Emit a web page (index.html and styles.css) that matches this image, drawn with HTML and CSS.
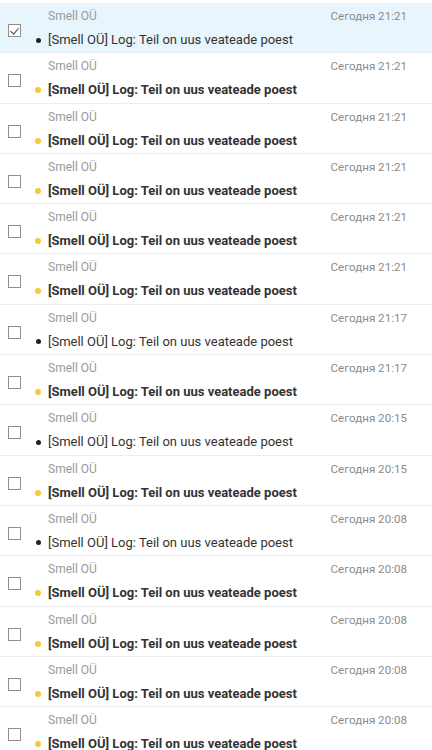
FILE: index.html
```html
<!DOCTYPE html>
<html lang="ru">
<head>
    <meta charset="UTF-8">
    <title>Inbox</title>
    <link rel="stylesheet" href="styles.css">
</head>
<body>

    <div id="mail-list">

        <div class="mail-row selected">
            <div class="mail-check"><span class="checkbox checked"></span></div>
            <div class="mail-body">
                <div class="mail-top"><span class="mail-from">Smell OÜ</span><span class="mail-date">Сегодня 21:21</span></div>
                <div class="mail-subject"><span class="dot"></span><span class="subject-text">[Smell OÜ] Log: Teil on uus veateade poest</span></div>
            </div>
        </div>

        <div class="mail-row unread">
            <div class="mail-check"><span class="checkbox"></span></div>
            <div class="mail-body">
                <div class="mail-top"><span class="mail-from">Smell OÜ</span><span class="mail-date">Сегодня 21:21</span></div>
                <div class="mail-subject"><span class="dot"></span><span class="subject-text">[Smell OÜ] Log: Teil on uus veateade poest</span></div>
            </div>
        </div>

        <div class="mail-row unread">
            <div class="mail-check"><span class="checkbox"></span></div>
            <div class="mail-body">
                <div class="mail-top"><span class="mail-from">Smell OÜ</span><span class="mail-date">Сегодня 21:21</span></div>
                <div class="mail-subject"><span class="dot"></span><span class="subject-text">[Smell OÜ] Log: Teil on uus veateade poest</span></div>
            </div>
        </div>

        <div class="mail-row unread">
            <div class="mail-check"><span class="checkbox"></span></div>
            <div class="mail-body">
                <div class="mail-top"><span class="mail-from">Smell OÜ</span><span class="mail-date">Сегодня 21:21</span></div>
                <div class="mail-subject"><span class="dot"></span><span class="subject-text">[Smell OÜ] Log: Teil on uus veateade poest</span></div>
            </div>
        </div>

        <div class="mail-row unread">
            <div class="mail-check"><span class="checkbox"></span></div>
            <div class="mail-body">
                <div class="mail-top"><span class="mail-from">Smell OÜ</span><span class="mail-date">Сегодня 21:21</span></div>
                <div class="mail-subject"><span class="dot"></span><span class="subject-text">[Smell OÜ] Log: Teil on uus veateade poest</span></div>
            </div>
        </div>

        <div class="mail-row unread">
            <div class="mail-check"><span class="checkbox"></span></div>
            <div class="mail-body">
                <div class="mail-top"><span class="mail-from">Smell OÜ</span><span class="mail-date">Сегодня 21:21</span></div>
                <div class="mail-subject"><span class="dot"></span><span class="subject-text">[Smell OÜ] Log: Teil on uus veateade poest</span></div>
            </div>
        </div>

        <div class="mail-row">
            <div class="mail-check"><span class="checkbox"></span></div>
            <div class="mail-body">
                <div class="mail-top"><span class="mail-from">Smell OÜ</span><span class="mail-date">Сегодня 21:17</span></div>
                <div class="mail-subject"><span class="dot"></span><span class="subject-text">[Smell OÜ] Log: Teil on uus veateade poest</span></div>
            </div>
        </div>

        <div class="mail-row unread">
            <div class="mail-check"><span class="checkbox"></span></div>
            <div class="mail-body">
                <div class="mail-top"><span class="mail-from">Smell OÜ</span><span class="mail-date">Сегодня 21:17</span></div>
                <div class="mail-subject"><span class="dot"></span><span class="subject-text">[Smell OÜ] Log: Teil on uus veateade poest</span></div>
            </div>
        </div>

        <div class="mail-row">
            <div class="mail-check"><span class="checkbox"></span></div>
            <div class="mail-body">
                <div class="mail-top"><span class="mail-from">Smell OÜ</span><span class="mail-date">Сегодня 20:15</span></div>
                <div class="mail-subject"><span class="dot"></span><span class="subject-text">[Smell OÜ] Log: Teil on uus veateade poest</span></div>
            </div>
        </div>

        <div class="mail-row unread">
            <div class="mail-check"><span class="checkbox"></span></div>
            <div class="mail-body">
                <div class="mail-top"><span class="mail-from">Smell OÜ</span><span class="mail-date">Сегодня 20:15</span></div>
                <div class="mail-subject"><span class="dot"></span><span class="subject-text">[Smell OÜ] Log: Teil on uus veateade poest</span></div>
            </div>
        </div>

        <div class="mail-row">
            <div class="mail-check"><span class="checkbox"></span></div>
            <div class="mail-body">
                <div class="mail-top"><span class="mail-from">Smell OÜ</span><span class="mail-date">Сегодня 20:08</span></div>
                <div class="mail-subject"><span class="dot"></span><span class="subject-text">[Smell OÜ] Log: Teil on uus veateade poest</span></div>
            </div>
        </div>

        <div class="mail-row unread">
            <div class="mail-check"><span class="checkbox"></span></div>
            <div class="mail-body">
                <div class="mail-top"><span class="mail-from">Smell OÜ</span><span class="mail-date">Сегодня 20:08</span></div>
                <div class="mail-subject"><span class="dot"></span><span class="subject-text">[Smell OÜ] Log: Teil on uus veateade poest</span></div>
            </div>
        </div>

        <div class="mail-row unread">
            <div class="mail-check"><span class="checkbox"></span></div>
            <div class="mail-body">
                <div class="mail-top"><span class="mail-from">Smell OÜ</span><span class="mail-date">Сегодня 20:08</span></div>
                <div class="mail-subject"><span class="dot"></span><span class="subject-text">[Smell OÜ] Log: Teil on uus veateade poest</span></div>
            </div>
        </div>

        <div class="mail-row unread">
            <div class="mail-check"><span class="checkbox"></span></div>
            <div class="mail-body">
                <div class="mail-top"><span class="mail-from">Smell OÜ</span><span class="mail-date">Сегодня 20:08</span></div>
                <div class="mail-subject"><span class="dot"></span><span class="subject-text">[Smell OÜ] Log: Teil on uus veateade poest</span></div>
            </div>
        </div>

        <div class="mail-row unread">
            <div class="mail-check"><span class="checkbox"></span></div>
            <div class="mail-body">
                <div class="mail-top"><span class="mail-from">Smell OÜ</span><span class="mail-date">Сегодня 20:08</span></div>
                <div class="mail-subject"><span class="dot"></span><span class="subject-text">[Smell OÜ] Log: Teil on uus veateade poest</span></div>
            </div>
        </div>

    </div>

</body>
</html>
```

FILE: styles.css
```css
body {
    margin: 0;
    background-color: #fff;
    font-family: Roboto, "Liberation Sans", Arial, sans-serif;
    overflow: hidden;
}
#mail-list {
    padding-top: 3px;
}
.mail-row {
    display: flex;
    box-sizing: border-box;
    height: 50.3px;
    border-bottom: 1px solid #ededed;
}
.mail-row.selected {
    background-color: #e9f5fd;
}
.mail-check {
    width: 32px;
    padding-left: 8px;
    padding-top: 21px;
    box-sizing: border-box;
}
.checkbox {
    display: block;
    box-sizing: border-box;
    width: 13px;
    height: 13px;
    border: 1px solid #8f8f8f;
    background-color: #fff;
    position: relative;
}
.checkbox.checked::after {
    content: "";
    position: absolute;
    left: 3px;
    top: 1px;
    width: 4px;
    height: 7px;
    border-right: 1.5px solid #444;
    border-bottom: 1.5px solid #444;
    transform: rotate(40deg);
}
.mail-body {
    flex: 1;
    padding-top: 5px;
    padding-right: 25px;
}
.mail-top {
    display: flex;
    justify-content: space-between;
    align-items: baseline;
    font-size: 12px;
    line-height: 16px;
    color: #9a9a9a;
    padding-left: 16px;
}
.mail-date {
    font-size: 11.6px;
    color: #8c8c8c;
}
.mail-subject {
    display: flex;
    align-items: center;
    margin-top: 6px;
    font-size: 13px;
    line-height: 20px;
    color: #333;
}
.dot {
    width: 12px;
    margin-right: 4px;
    display: flex;
    justify-content: center;
}
.dot::before {
    content: "";
    width: 5px;
    height: 5px;
    border-radius: 50%;
    background-color: #222;
}
.unread .dot::before {
    width: 6px;
    height: 6px;
    background-color: #f7c83c;
}
.unread .subject-text {
    font-weight: bold;
}
```
